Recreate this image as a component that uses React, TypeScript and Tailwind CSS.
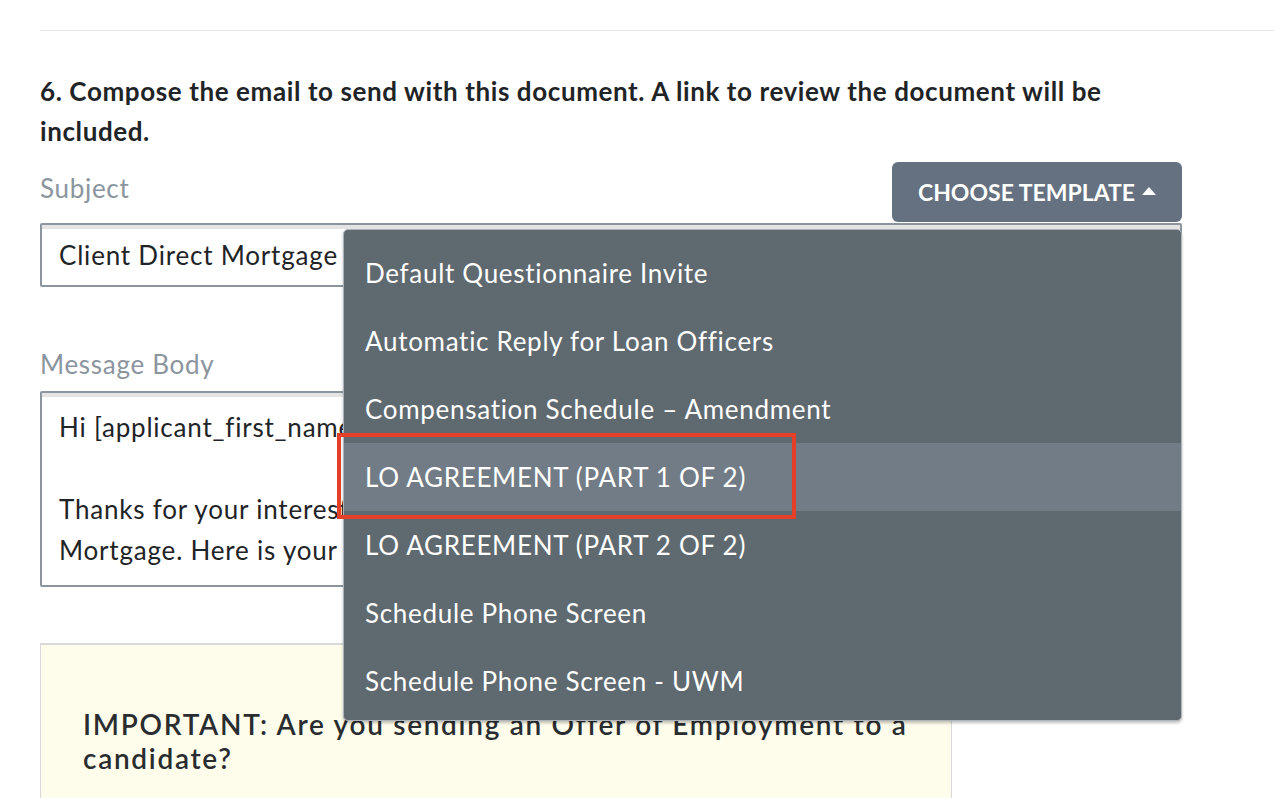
const templates = [
  'Default Questionnaire Invite',
  'Automatic Reply for Loan Officers',
  'Compensation Schedule – Amendment',
  'LO AGREEMENT (PART 1 OF 2)',
  'LO AGREEMENT (PART 2 OF 2)',
  'Schedule Phone Screen',
  'Schedule Phone Screen - UWM',
]

function TemplateMenu() {
  return (
    <div className="absolute top-[67px] left-[303px] right-0 z-20 rounded-[5px] border border-[#aeb4b9] bg-[#5f6970] pt-[9px] pb-[5px] shadow-[0_2px_3px_rgba(0,0,0,0.25)]">
      {templates.map((t, i) => (
        <div
          key={t}
          className={
            'relative flex h-[68px] items-center pl-[21px] text-[26px] tracking-[0.7px] text-white ' +
            (i === 3 ? 'bg-[#727c86]' : '')
          }
        >
          {t}
          {i === 3 && (
            <div className="absolute top-[-10px] bottom-[-8px] left-[-7px] w-[459px] border-[4px] border-[#e53f27]" />
          )}
        </div>
      ))}
    </div>
  )
}

export default function App() {
  return (
    <div className="h-[798px] overflow-hidden bg-white pl-[40px] pt-[30px] font-['Lato','Noto_Sans',sans-serif] text-[#1f2427]">
      <div className="border-t border-[#e6e9ea]" />
      <div className="w-[1142px] pt-[40px]">
        <h2 className="w-[1100px] text-[26px] font-bold leading-[40px] tracking-[0.6px]">
          6. Compose the email to send with this document. A link to review the document will be included.
        </h2>

        <div className="relative mt-[11px]">
          <div className="flex items-center justify-between">
            <span className="mb-[8px] text-[26px] leading-[32px] tracking-[0.7px] text-[#8b959e]">Subject</span>
            <button className="flex h-[60px] w-[290px] items-center justify-center gap-[7px] rounded-[6px] bg-[#657181] text-[23px] font-bold text-white">
              CHOOSE TEMPLATE
              <svg width="14" height="8" viewBox="0 0 14 8" className="mt-[-2px]">
                <path d="M7 0 L14 8 L0 8 Z" fill="white" />
              </svg>
            </button>
          </div>

          <div className="mt-[1px] flex h-[64px] items-center rounded-[2px] border-2 border-[#8b959e] px-[17px] text-[26px] tracking-[0.8px] shadow-[inset_0_4px_0_#e4e4e4]">
            Client Direct Mortgage – LO Agreement
          </div>

          <TemplateMenu />
        </div>

        <div className="mt-[61px] text-[26px] leading-[32px] tracking-[0.7px] text-[#8b959e]">Message Body</div>
        <div className="mt-[11px] h-[196px] rounded-[2px] border-2 border-[#8b959e] px-[17px] pt-[14px] text-[26px] leading-[41px] tracking-[0.8px] shadow-[inset_0_4px_0_#e4e4e4]">
          <p>Hi [applicant_first_name],</p>
          <p className="mt-[41px]">
            Thanks for your interest in working with Client Direct
            <br />
            Mortgage. Here is your offer letter to review and sign.
          </p>
        </div>

        <div className="mt-[56px] h-[200px] w-[912px] border border-t-2 border-[#d8d9d9] bg-[#fefdec] pl-[42px] pr-[10px] pt-[62px]">
          <p className="text-[28px] font-semibold leading-[34px] tracking-[1.7px] text-[#2a2d30]">
            IMPORTANT: Are you sending an Offer of Employment to a
            <br />
            candidate?
          </p>
        </div>
      </div>
    </div>
  )
}
